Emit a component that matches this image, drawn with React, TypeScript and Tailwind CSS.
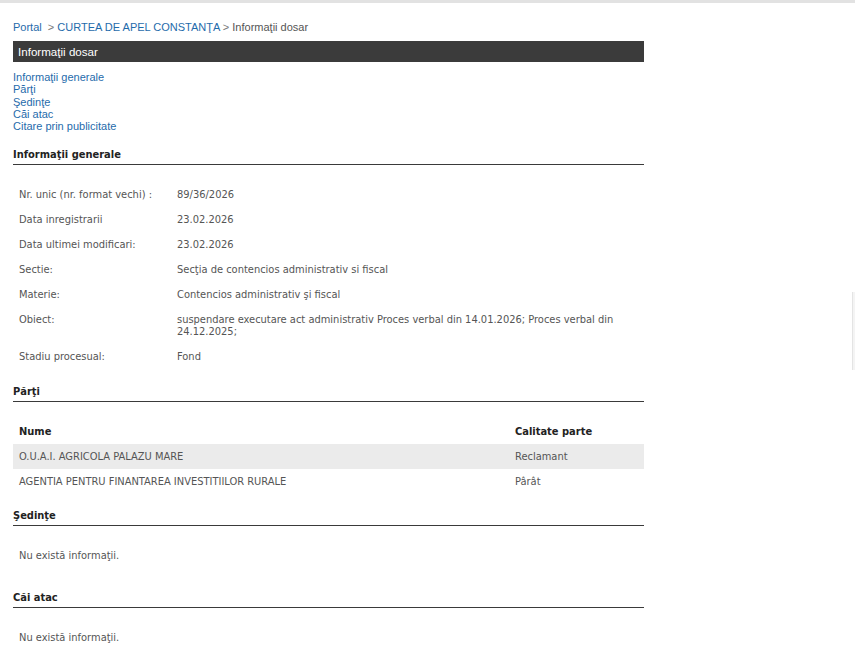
const NAV = ['Informaţii generale', 'Părţi', 'Şedinţe', 'Căi atac', 'Citare prin publicitate'];

const GENERAL: { label: string; value: string }[] = [
  { label: 'Nr. unic (nr. format vechi) :', value: '89/36/2026' },
  { label: 'Data inregistrarii', value: '23.02.2026' },
  { label: 'Data ultimei modificari:', value: '23.02.2026' },
  { label: 'Sectie:', value: 'Secţia de contencios administrativ si fiscal' },
  { label: 'Materie:', value: 'Contencios administrativ şi fiscal' },
  {
    label: 'Obiect:',
    value: 'suspendare executare act administrativ Proces verbal din 14.01.2026; Proces verbal din 24.12.2025;',
  },
  { label: 'Stadiu procesual:', value: 'Fond' },
];

const PARTI = [
  { nume: 'O.U.A.I. AGRICOLA PALAZU MARE', calitate: 'Reclamant' },
  { nume: 'AGENTIA PENTRU FINANTAREA INVESTITIILOR RURALE', calitate: 'Pârât' },
];

const body = "font-['DejaVu_Sans_Condensed','Liberation_Sans_Narrow','Liberation_Sans',sans-serif]";

function Heading({ children }: { children: string }) {
  return (
    <div className={`${body} border-b border-[#3a3a3a] pb-[2px] text-[11px] font-bold leading-[14px] text-[#222]`}>
      {children}
    </div>
  );
}

function Empty() {
  return <p className={`${body} px-[6px] py-[23px] text-[11px] leading-[14px] text-[#555]`}>Nu există informaţii.</p>;
}

export default function App() {
  return (
    <div className="relative min-h-[650px] bg-white font-['Liberation_Sans',Arial,sans-serif]">
      <div className="h-[3px] bg-[#e2e2e2]" />
      <div className="box-content w-[631px] pl-[13px]">
        <div className="pt-[17px] pb-[7px] text-[11px] leading-[14px] text-[#555]">
          <a className="text-[#1f6bab]">Portal</a>
          <span className="text-[#777]"> &nbsp;&gt; </span>
          <a className="text-[#1f6bab]">CURTEA DE APEL CONSTANŢA</a>
          <span className="text-[#777]"> &gt; </span>
          <span>Informaţii dosar</span>
        </div>
        <div className="flex h-[21px] items-center bg-[#3b3b3b] px-[5px] text-[11.6px] text-white">Informaţii dosar</div>

        <ul className="pt-[9px] text-[11px] leading-[12.3px] text-[#1f6bab]">
          {NAV.map(n => (
            <li key={n}>
              <a>{n}</a>
            </li>
          ))}
        </ul>

        <div className="mt-[16px]">
          <Heading>Informaţii generale</Heading>
          <div className={`${body} pt-[24px] pb-[9px] text-[11px] leading-[12px] text-[#555]`}>
            {GENERAL.map(r => (
              <div key={r.label} className="flex px-[6px] pb-[13px]">
                <div className="w-[158px] shrink-0">{r.label}</div>
                <div className="flex-1 pr-[16px]">{r.value}</div>
              </div>
            ))}
          </div>
        </div>

        <Heading>Părţi</Heading>
        <table className={`${body} mt-[18px] w-full border-collapse text-[11px] text-[#555]`}>
          <thead>
            <tr className="h-[24px] text-left text-[#222]">
              <th className="px-[6px] font-bold">Nume</th>
              <th className="w-[130px] px-[1px] font-bold">Calitate parte</th>
            </tr>
          </thead>
          <tbody>
            {PARTI.map((p, i) => (
              <tr key={p.nume} className={`h-[25px] ${i === 0 ? 'bg-[#ebebeb]' : ''}`}>
                <td className="px-[6px]">{p.nume}</td>
                <td className="px-[1px]">{p.calitate}</td>
              </tr>
            ))}
          </tbody>
        </table>

        <div className="mt-[15px]">
          <Heading>Şedinţe</Heading>
          <Empty />
        </div>
        <div className="mt-[5px]">
          <Heading>Căi atac</Heading>
          <Empty />
        </div>
      </div>
      <div className="absolute right-0 top-[292px] h-[78px] w-[3px] border-l border-[#e4e4e4] bg-[#f4f4f4]" />
    </div>
  );
}
